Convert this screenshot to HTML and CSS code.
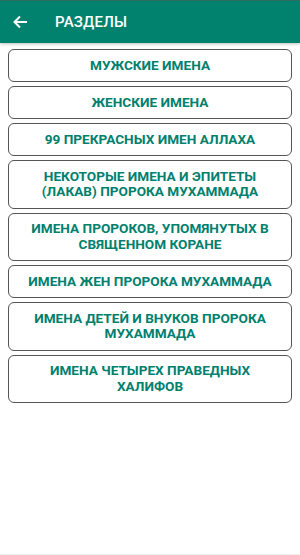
FILE: index.html
```html
<!DOCTYPE html>
<html lang="ru">
<head>
  <meta charset="UTF-8" />
  <meta name="viewport" content="width=device-width, initial-scale=1.0"/>
  <title>Разделы</title>
  <link rel="stylesheet" href="styles.css">
</head>
<body>
  <div class="app">
    <!-- Шапка -->
    <header class="toolbar">
      <a href="#" class="back">
        <svg width="16" height="16" viewBox="0 0 16 16">
          <path d="M15 8H2.5M8 2.5L2.5 8 8 13.5" fill="none" stroke="#fff" stroke-width="2"/>
        </svg>
      </a>
      <h1 class="title">РАЗДЕЛЫ</h1>
    </header>

    <!-- Список разделов -->
    <main class="sections">
      <a href="#" class="section-btn">МУЖСКИЕ ИМЕНА</a>
      <a href="#" class="section-btn">ЖЕНСКИЕ ИМЕНА</a>
      <a href="#" class="section-btn">99 ПРЕКРАСНЫХ ИМЕН АЛЛАХА</a>
      <a href="#" class="section-btn">НЕКОТОРЫЕ ИМЕНА И ЭПИТЕТЫ (ЛАКАВ) ПРОРОКА МУХАММАДА</a>
      <a href="#" class="section-btn">ИМЕНА ПРОРОКОВ, УПОМЯНУТЫХ В СВЯЩЕННОМ КОРАНЕ</a>
      <a href="#" class="section-btn">ИМЕНА ЖЕН ПРОРОКА МУХАММАДА</a>
      <a href="#" class="section-btn">ИМЕНА ДЕТЕЙ И ВНУКОВ ПРОРОКА МУХАММАДА</a>
      <a href="#" class="section-btn">ИМЕНА ЧЕТЫРЕХ ПРАВЕДНЫХ ХАЛИФОВ</a>
    </main>
  </div>
</body>
</html>
```

FILE: styles.css
```css
/* Сброс */
* {
  margin: 0;
  padding: 0;
  box-sizing: border-box;
}

html, body {
  height: 100%;
}

body {
  font-family: Roboto, "Liberation Sans", sans-serif;
  background: #fff;
}

.app {
  height: 100%;
  display: flex;
  flex-direction: column;
  border-bottom: 1px solid #eee;
  padding-bottom: 3px;
}

.toolbar {
  height: 43px;
  display: flex;
  align-items: center;
  background: #00826f;
  border-top: 1px solid #2d6b60;
  box-shadow: 0 1px 3px rgba(0, 0, 0, 0.25);
  color: #fff;
}

.back {
  display: flex;
  width: 55px;
  padding-left: 12px;
}

.title {
  font-size: 15px;
  font-weight: 500;
  letter-spacing: 0.2px;
}

.sections {
  flex: 1;
  display: flex;
  flex-direction: column;
  gap: 4px;
  padding: 6px 8px;
}

.section-btn {
  display: block;
  padding: 7.75px 12px;
  border: 1px solid #555;
  border-radius: 6px;
  text-align: center;
  text-decoration: none;
  color: #00806d;
  font-size: 13.6px;
  font-weight: 700;
  line-height: 15.5px;
}
```
